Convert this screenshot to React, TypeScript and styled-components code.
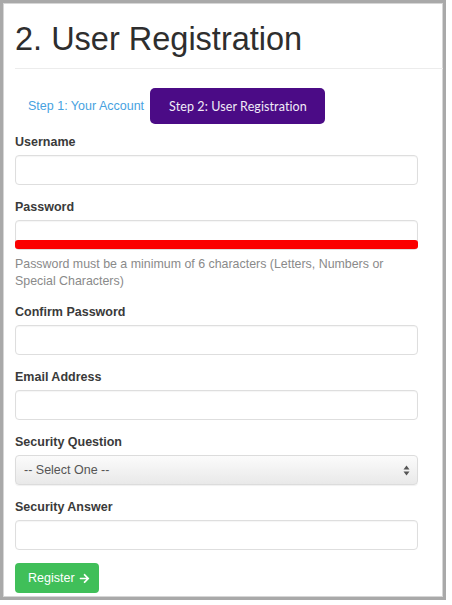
import React from "react";
import styled, { createGlobalStyle } from "styled-components";
import { FaArrowRight } from "react-icons/fa";

const Global = createGlobalStyle`
  html, body { margin: 0; padding: 0; background: #ffffff; }
  body { font-family: "Liberation Sans", Arial, sans-serif; color: #333; }
  * { box-sizing: border-box; }
`;

const Frame = styled.div`
  width: 446px;
  height: 600px;
  border: 3px solid #a9a9a9;
  box-shadow: inset 0 0 0 1px #d6d6d6;
  background: #fff;
  padding: 16px 0 0 12px;
  overflow: hidden;
`;

const Header = styled.h1`
  margin: 0;
  font-family: "Liberation Sans", Arial, sans-serif;
  font-weight: 400;
  font-size: 32.5px;
  line-height: 40px;
  color: #2e2e2e;
  padding-bottom: 9px;
  border-bottom: 1px solid #ececec;
`;

const Tabs = styled.nav`
  display: flex;
  align-items: center;
  margin-top: 19px;
  height: 36px;
`;

const Tab = styled.span<{ $active?: boolean }>`
  display: flex;
  align-items: center;
  height: 36px;
  border-radius: 5px;
  padding: ${(p) => (p.$active ? "0 18px 0 19px" : "0 6px 0 13px")};
  background: ${(p) => (p.$active ? "#4b0b86" : "transparent")};
  color: ${(p) => (p.$active ? "#f1ecf7" : "#47a2df")};
  font-family: ${(p) =>
    p.$active ? '"Lato", "Open Sans", sans-serif' : '"Liberation Sans", Arial, sans-serif'};
  font-size: 12.5px;
  letter-spacing: ${(p) => (p.$active ? "0.1px" : "0")};
`;

const Form = styled.form`
  width: 403px;
  margin-top: 9px;
`;

const Group = styled.div`
  margin-bottom: 13px;
`;

const Label = styled.label`
  display: block;
  font-weight: 700;
  font-size: 12.5px;
  line-height: 18px;
  color: #3a3a3a;
  margin-bottom: 4px;
`;

const Input = styled.input`
  display: block;
  width: 100%;
  height: 30px;
  border: 1px solid #dedede;
  border-radius: 4px;
  box-shadow: inset 0 1px 1px rgba(0, 0, 0, 0.04);
  background: #fff;
  font-family: inherit;
  font-size: 12.5px;
  padding: 0 8px;
  outline: none;
`;

const StrengthWrap = styled.div`
  position: relative;
`;

const StrengthBar = styled.div`
  position: absolute;
  left: 0;
  right: 0;
  bottom: 1px;
  height: 9px;
  border-radius: 3px;
  background: #fb0000;
`;

const Help = styled.p`
  margin: 6px 0 0;
  font-size: 12.4px;
  line-height: 17px;
  color: #8a8a8a;
`;

const SelectBox = styled.div`
  display: flex;
  align-items: center;
  justify-content: space-between;
  height: 30px;
  padding: 0 7px 0 8px;
  border: 1px solid #dcdcdc;
  border-radius: 4px;
  background: linear-gradient(#fbfbfb, #e9e9e9);
  box-shadow: 0 1px 1px rgba(0, 0, 0, 0.06);
  font-size: 12.5px;
  color: #555;
`;

const Arrows = styled.svg`
  width: 7px;
  height: 11px;
`;

const Button = styled.button`
  display: flex;
  align-items: center;
  gap: 4px;
  height: 30px;
  width: 84px;
  padding: 0 0 0 13px;
  border: none;
  border-radius: 4px;
  background: #40bf59;
  color: #fff;
  font-family: "Liberation Sans", Arial, sans-serif;
  font-size: 12.5px;
  cursor: pointer;
`;

const fields = [
  { label: "Confirm Password" },
  { label: "Email Address" },
];

export default function App() {
  return (
    <>
      <Global />
      <Frame>
        <Header>2. User Registration</Header>
        <Tabs>
          <Tab>Step 1: Your Account</Tab>
          <Tab $active>Step 2: User Registration</Tab>
        </Tabs>
        <Form onSubmit={(e) => e.preventDefault()}>
          <Group>
            <Label>Username</Label>
            <Input type="text" />
          </Group>
          <Group>
            <Label>Password</Label>
            <StrengthWrap>
              <Input type="password" />
              <StrengthBar />
            </StrengthWrap>
            <Help>
              Password must be a minimum of 6 characters (Letters, Numbers or Special
              Characters)
            </Help>
          </Group>
          {fields.map((f) => (
            <Group key={f.label}>
              <Label>{f.label}</Label>
              <Input type="text" />
            </Group>
          ))}
          <Group>
            <Label>Security Question</Label>
            <SelectBox>
              <span>-- Select One --</span>
              <Arrows viewBox="0 0 7 11">
                <path d="M3.5 0.5 L6.5 4.5 H0.5 Z" fill="#555" />
                <path d="M3.5 10.5 L6.5 6.5 H0.5 Z" fill="#555" />
              </Arrows>
            </SelectBox>
          </Group>
          <Group>
            <Label>Security Answer</Label>
            <Input type="text" />
          </Group>
          <Button type="submit">
            Register <FaArrowRight size={11} />
          </Button>
        </Form>
      </Frame>
    </>
  );
}
